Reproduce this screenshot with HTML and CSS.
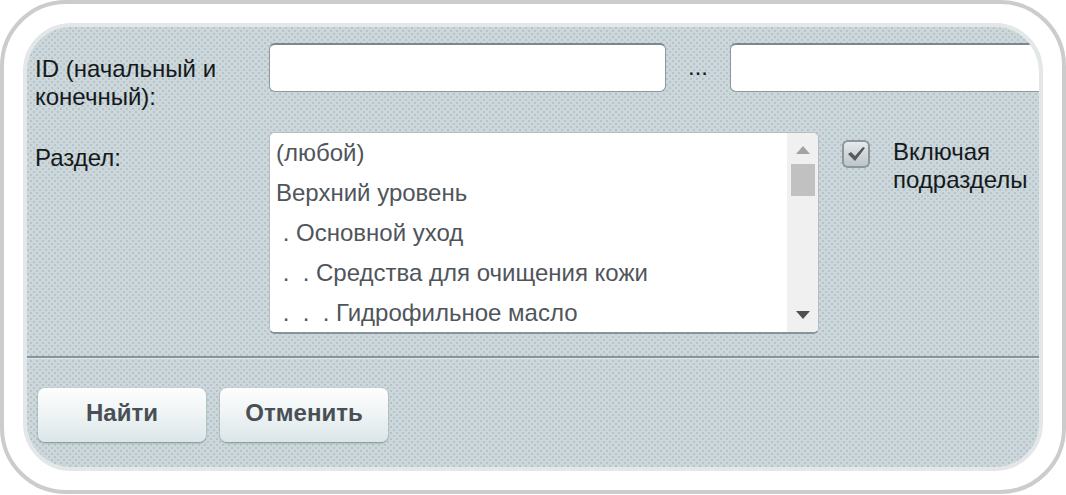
FILE: index.html
```html
<!DOCTYPE html>
<html lang="ru">
	<head>
		<meta charset="utf-8">
		<title>Фильтр</title>
		<link rel="stylesheet" href="styles.css">
	</head>
	<body>
		<div class="frame">
			<form class="panel">
				<div class="fields">
					<label class="name" for="id-from">ID (начальный и конечный):</label>
					<div class="range">
						<input class="field" type="text" id="id-from">
						<span class="dots">...</span>
						<input class="field" type="text" id="id-to" aria-label="ID конечный">
					</div>

					<label class="name" for="section">Раздел:</label>
					<div class="section">
						<div class="listbox">
							<select class="list" id="section" size="5">
								<option>(любой)</option>
								<option>Верхний уровень</option>
								<option>&nbsp;. Основной уход</option>
								<option>&nbsp;. &nbsp;. Средства для очищения кожи</option>
								<option>&nbsp;. &nbsp;. &nbsp;. Гидрофильное масло</option>
							</select>
							<div class="scrollbar">
								<svg class="arrow" width="14" height="8" viewBox="0 0 14 8"><path d="M0 8L7 0L14 8Z" fill="#a3a3a3"/></svg>
								<div class="thumb"></div>
								<svg class="arrow" width="14" height="8" viewBox="0 0 14 8"><path d="M0 0H14L7 8Z" fill="#505050"/></svg>
							</div>
						</div>
						<input class="check" type="checkbox" id="subsections" checked>
						<label class="check-name" for="subsections">Включая подразделы</label>
					</div>
				</div>
				<div class="buttons">
					<button class="btn" type="submit">Найти</button>
					<button class="btn" type="reset">Отменить</button>
				</div>
			</form>
		</div>
	</body>
</html>
```

FILE: styles.css
```css
* {
	box-sizing: border-box;
}
body {
	margin: 0;
	background: #fff;
	font-family: "Liberation Sans", Arial, sans-serif;
	font-size: 24px;
	line-height: 28px;
	color: #15191c;
}
.frame {
	padding: 19px;
	border: 4px solid #ccc;
	border-radius: 66px;
}
.panel {
	overflow: hidden;
	border: 4px solid #e3e7e8;
	border-radius: 48px;
	background-color: #cbd7da;
	background-image:
		radial-gradient(circle at 1px 1px, #b6c3c8 1px, transparent 1px),
		radial-gradient(circle at 4px 4px, #b6c3c8 1px, transparent 1px);
	background-size: 6px 6px;
}

/* filter fields */
.fields {
	display: grid;
	grid-template-columns: 222px 1fr;
	column-gap: 12px;
	row-gap: 21px;
	padding: 16px 0 22px 8px;
	border-bottom: 2px solid #84949a;
}
.name {
	padding-top: 12px;
}
.range {
	display: flex;
	min-width: 0;
}
.field {
	flex: none;
	width: 397px;
	height: 49px;
	padding: 0 8px;
	border: 1px solid #8b989e;
	border-top: 2px solid #7b888e;
	border-radius: 6px;
	background: #fff;
	font: inherit;
}
.dots {
	flex: none;
	width: 64px;
	padding-top: 10px;
	text-align: center;
}
.section {
	display: flex;
}
.listbox {
	display: flex;
	flex: none;
	width: 550px;
	height: 202px;
	overflow: hidden;
	border: 1px solid #b3bfc4;
	border-bottom: 2px solid #87959b;
	border-radius: 6px;
	background: #fff;
}
.list {
	flex: 1;
	min-width: 0;
	padding: 0;
	border: 0;
	outline: 0;
	overflow: hidden;
	background: #fff;
	color: #50555b;
	font: inherit;
	scrollbar-width: none;
}
.list option {
	min-height: 40px;
	padding: 6px 6px 0;
}
.scrollbar {
	display: flex;
	flex-direction: column;
	align-items: center;
	width: 31px;
	padding: 13px 0;
	background: #f0f0f0;
}
.thumb {
	width: 24px;
	height: 32px;
	margin: 10px 0 auto;
	background: #c1c1c1;
}
.check {
	appearance: none;
	flex: none;
	width: 28px;
	height: 28px;
	margin: 8px 23px 0;
	border: 2px solid #8c979c;
	border-radius: 6px;
	background: linear-gradient(#e6eaeb, #bcc5c8);
}
.check:checked {
	background: url("data:image/svg+xml,%3Csvg xmlns='http://www.w3.org/2000/svg' viewBox='0 0 24 24'%3E%3Cpath d='M4 12L7 10L11 14L19 5L21 6L11 19Z' fill='%23535a5e'/%3E%3C/svg%3E"), linear-gradient(#e6eaeb, #bcc5c8);
}
.check-name {
	padding-top: 6px;
}

/* buttons */
.buttons {
	display: flex;
	gap: 14px;
	padding: 29px 11px 25px;
	border-top: 1px solid #dbe7e9;
}
.btn {
	width: 168px;
	height: 54px;
	padding: 0 0 4px;
	border: 0;
	border-radius: 7px;
	background: linear-gradient(#fdfefe, #eef3f4 50%, #dbe6e8);
	box-shadow: 0 1px 2px #7f8d93;
	color: #484f55;
	font: inherit;
	font-weight: bold;
}
```
